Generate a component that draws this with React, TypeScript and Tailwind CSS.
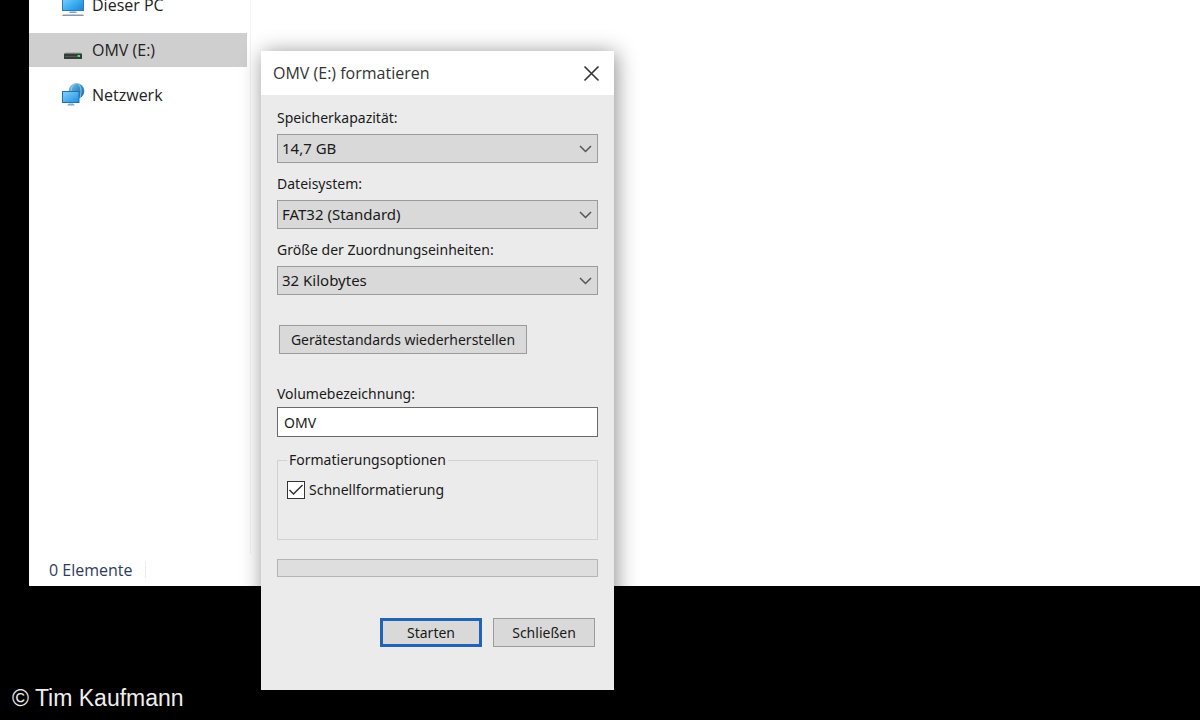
import { useState } from "react";
import type { ReactNode } from "react";

function MonitorIcon() {
  return (
    <svg width="24" height="24" viewBox="0 0 24 24" aria-hidden="true">
      <defs>
        <linearGradient id="screen" x1="0" y1="0" x2="1" y2="1">
          <stop offset="0" stopColor="#8fd8fb" />
          <stop offset="0.5" stopColor="#45b2f3" />
          <stop offset="1" stopColor="#1b86d8" />
        </linearGradient>
      </defs>
      <rect x="1" y="1" width="22" height="17" fill="#2b7bbd" />
      <rect x="2" y="2" width="20" height="15" fill="url(#screen)" />
      <path d="M9 18.500h6l1 1.500H8z" fill="#6fa6cf" />
      <path d="M2 21.500h20l1 1.500H1z" fill="#8b98a3" />
    </svg>
  );
}

function DriveIcon() {
  return (
    <svg width="24" height="24" viewBox="0 0 24 24" aria-hidden="true">
      <path d="M5 14h14l2 2H3z" fill="#b4b7b5" />
      <rect x="3" y="15.500" width="18" height="5.500" rx="0.500" fill="#353d3a" />
      <rect x="4" y="18" width="12" height="1" fill="#515a56" />
      <rect x="16.500" y="17" width="2.500" height="2" fill="#4fe06a" />
    </svg>
  );
}

function NetworkIcon() {
  return (
    <svg width="24" height="24" viewBox="0 0 24 24" aria-hidden="true">
      <defs>
        <linearGradient id="globe" x1="0" y1="0" x2="1" y2="1">
          <stop offset="0" stopColor="#8cc7e8" />
          <stop offset="0.5" stopColor="#3b8fc4" />
          <stop offset="1" stopColor="#1d659b" />
        </linearGradient>
        <linearGradient id="panel" x1="0" y1="0" x2="1" y2="1">
          <stop offset="0" stopColor="#7fd0fa" />
          <stop offset="1" stopColor="#2592e2" />
        </linearGradient>
      </defs>
      <circle cx="15.500" cy="8" r="7.800" fill="url(#globe)" />
      <path d="M14 .500c-3 2-4 5-4 8M17 .500c3 3 4 7 2 14" fill="none" stroke="#a5d6ef" strokeWidth="0.800" />
      <rect x="1" y="8" width="17.500" height="12" fill="#1e70b5" />
      <rect x="2" y="9" width="15.500" height="10" fill="url(#panel)" />
      <path d="M8 20.500h4l2 2H6z" fill="#7fa9c9" />
    </svg>
  );
}

function NavItem({ icon, label, selected = false }: { icon: ReactNode; label: string; selected?: boolean }) {
  return (
    <a
      href="#"
      aria-current={selected ? "page" : undefined}
      className={
        selected
          ? "flex h-[34px] items-center gap-[7px] bg-[#cfcfcf] pl-8"
          : "flex h-[34px] items-center gap-[7px] pl-8"
      }
    >
      {icon}
      <span>{label}</span>
    </a>
  );
}

function SelectField({ id, label, options }: { id: string; label: string; options: string[] }) {
  return (
    <div className="flex flex-col gap-1">
      <label htmlFor={id} className="leading-6">
        {label}
      </label>
      <div className="relative">
        <select
          id={id}
          className="block h-[29px] w-full appearance-none border border-[#9b9b9b] bg-[#d9d9d9] pr-8 pl-1 text-[15px]"
        >
          {options.map((option) => (
            <option key={option}>{option}</option>
          ))}
        </select>
        <svg
          className="pointer-events-none absolute top-2 right-1.5"
          width="13"
          height="13"
          viewBox="0 0 13 13"
          fill="none"
          stroke="#555"
          strokeWidth="1.500"
          aria-hidden="true"
        >
          <path d="M1 4l5.500 5.500L12 4" />
        </svg>
      </div>
    </div>
  );
}

function FormatDialog() {
  const [quick, setQuick] = useState(true);
  return (
    <section
      role="dialog"
      aria-labelledby="dialog-title"
      className="absolute top-[51px] left-[261px] w-[353px] bg-[#ebebeb] font-['Noto_Sans',sans-serif] text-sm text-[#1a1a1a]"
    >
      <header className="flex h-11 items-center justify-between bg-white pr-3.5 pl-3">
        <h1 id="dialog-title" className="font-['Open_Sans',sans-serif] text-base text-[#333]">
          OMV (E:) formatieren
        </h1>
        <button type="button" aria-label="Fenster schließen">
          <svg width="17" height="17" viewBox="0 0 17 17" stroke="#333" strokeWidth="1.600" aria-hidden="true">
            <path d="M1.500 1.500l14 14M15.500 1.500l-14 14" />
          </svg>
        </button>
      </header>
      <form className="px-4 pt-[11px] pb-[43px]" onSubmit={(event) => event.preventDefault()}>
        <div className="flex flex-col gap-[9px]">
          <SelectField id="capacity" label="Speicherkapazität:" options={["14,7 GB"]} />
          <SelectField id="filesystem" label="Dateisystem:" options={["FAT32 (Standard)", "NTFS", "exFAT"]} />
          <SelectField id="unit" label="Größe der Zuordnungseinheiten:" options={["32 Kilobytes", "64 Kilobytes"]} />
        </div>
        <button
          type="button"
          className="mt-[30px] ml-0.5 block h-[29px] w-[248px] border border-[#9b9b9b] bg-[#d9d9d9]"
        >
          Gerätestandards wiederherstellen
        </button>
        <label htmlFor="volume" className="mt-7 block leading-6">
          Volumebezeichnung:
        </label>
        <input
          id="volume"
          type="text"
          defaultValue="OMV"
          className="mt-px block h-[30px] w-full border border-[#6a6a6a] bg-white px-1.5"
        />
        <fieldset className="mt-[11px] h-[92px] border border-[#d2d2d2] px-[9px]">
          <legend className="px-0.5 leading-6">Formatierungsoptionen</legend>
          <label className="mt-1.5 flex items-center gap-1 leading-6">
            <span className="relative flex">
              <input
                type="checkbox"
                checked={quick}
                onChange={(event) => setQuick(event.target.checked)}
                className="size-[18px] appearance-none border border-[#333] bg-white"
              />
              {quick && (
                <svg
                  className="pointer-events-none absolute inset-0"
                  width="18"
                  height="18"
                  viewBox="0 0 18 18"
                  fill="none"
                  stroke="#333"
                  strokeWidth="1.500"
                  aria-hidden="true"
                >
                  <path d="M2.500 9l4 4 9-9" />
                </svg>
              )}
            </span>
            Schnellformatierung
          </label>
        </fieldset>
        <div
          role="progressbar"
          aria-label="Fortschritt"
          aria-valuenow={0}
          className="mt-[19px] h-[18px] border border-[#b5b5b5] bg-[#dedede]"
        />
        <div className="mt-[41px] flex justify-end gap-[11px] pr-[3px]">
          <button type="submit" className="h-[29px] w-[102px] border-3 border-[#2163b4] bg-[#d9d9d9]">
            Starten
          </button>
          <button type="button" className="h-[29px] w-[102px] border border-[#9b9b9b] bg-[#d9d9d9]">
            Schließen
          </button>
        </div>
      </form>
    </section>
  );
}

export default function App() {
  return (
    <div className="relative flex min-h-screen flex-col overflow-hidden bg-black font-['Open_Sans',sans-serif]">
      <main className="relative ml-[29px] flex h-[586px] flex-col overflow-hidden bg-white text-base text-[#222]">
        <div className="flex grow">
          <nav className="-mt-3 flex w-[218px] flex-col gap-[11px]">
            <NavItem icon={<MonitorIcon />} label="Dieser PC" />
            <NavItem icon={<DriveIcon />} label="OMV (E:)" selected />
            <NavItem icon={<NetworkIcon />} label="Netzwerk" />
          </nav>
          <div className="ml-[3px] grow border-l border-[#f3f3f3]" />
        </div>
        <footer className="flex h-8 items-center pl-5 text-[#2f3c5c]">
          <span className="border-r border-[#ececec] pr-3 leading-4">0 Elemente</span>
        </footer>
        <div className="absolute top-[51px] left-[232px] h-[640px] w-[353px] shadow-[2px_2px_20px_rgba(0,0,0,0.45)]" />
      </main>
      <FormatDialog />
      <p className="mt-24 pl-3 font-['Liberation_Sans',sans-serif] text-[23px] leading-8 text-[#eee]">
        © Tim Kaufmann
      </p>
    </div>
  );
}
